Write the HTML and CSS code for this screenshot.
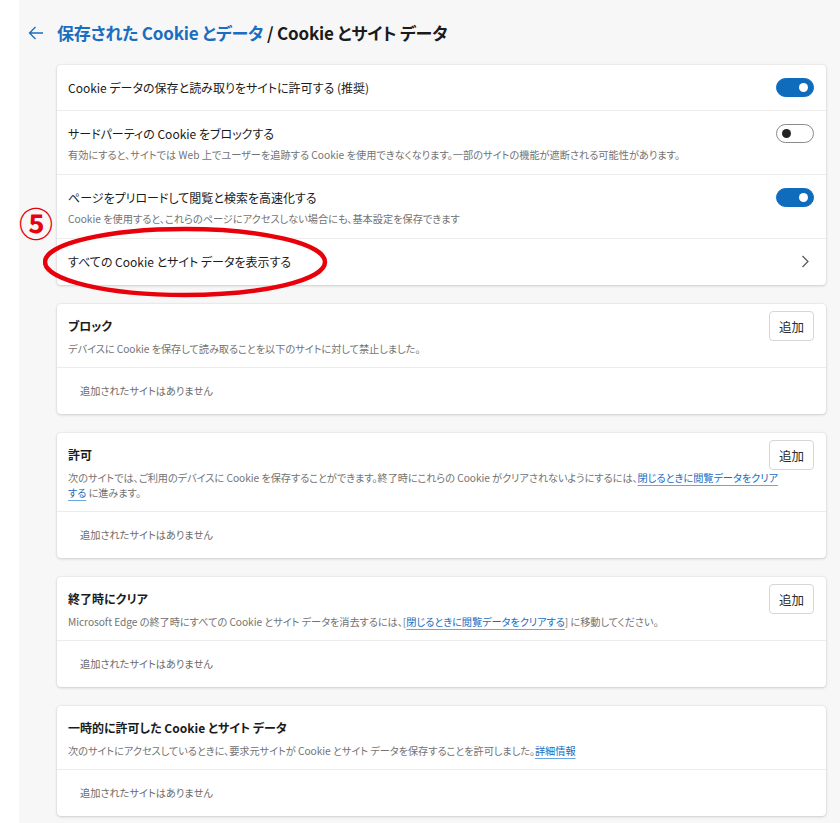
FILE: index.html
```html
<!DOCTYPE html>
<html lang="ja">

<head>
	<meta charset="utf-8" />
	<title>Cookie とサイト データ</title>
	<link rel="stylesheet" href="styles.css">
</head>

<body>
	<div class="page">
		<div class="rail"></div>
		<main class="content">
			<header class="crumbs">
				<button class="back" aria-label="戻る">
					<svg width="16" height="14" viewBox="0 0 16 14">
						<path d="M15 7H1.5M7.5 1L1.5 7l6 6" fill="none" stroke="#1a6dc0" stroke-width="1.3" />
					</svg>
				</button>
				<h1><a href="#">保存された Cookie とデータ</a> / Cookie とサイト データ</h1>
			</header>

			<section class="card">
				<div class="row">
					<div class="row-text">
						<div class="row-title">Cookie データの保存と読み取りをサイトに許可する (推奨)</div>
					</div>
					<span class="toggle on"></span>
				</div>
				<div class="row">
					<div class="row-text">
						<div class="row-title">サードパーティの Cookie をブロックする</div>
						<div class="row-desc">有効にすると、サイトでは Web 上でユーザーを追跡する Cookie を使用できなくなります。一部のサイトの機能が遮断される可能性があります。</div>
					</div>
					<span class="toggle"></span>
				</div>
				<div class="row">
					<div class="row-text">
						<div class="row-title">ページをプリロードして閲覧と検索を高速化する</div>
						<div class="row-desc">Cookie を使用すると、これらのページにアクセスしない場合にも、基本設定を保存できます</div>
					</div>
					<span class="toggle on"></span>
				</div>
				<a class="row link-row" href="#">
					<div class="row-text">
						<div class="row-title">すべての Cookie とサイト データを表示する</div>
					</div>
					<svg class="chevron" width="8" height="13" viewBox="0 0 8 13">
						<path d="M1.5 1l5.5 5.5L1.5 12" fill="none" stroke="#555" stroke-width="1.2" />
					</svg>
				</a>
			</section>

			<section class="card">
				<div class="list-head">
					<div class="list-text">
						<h2>ブロック</h2>
						<p>デバイスに Cookie を保存して読み取ることを以下のサイトに対して禁止しました。</p>
					</div>
					<button class="add">追加</button>
				</div>
				<div class="empty">追加されたサイトはありません</div>
			</section>

			<section class="card">
				<div class="list-head">
					<div class="list-text">
						<h2>許可</h2>
						<p>次のサイトでは、ご利用のデバイスに Cookie を保存することができます。終了時にこれらの Cookie がクリアされないようにするには、<a href="#">閉じるときに閲覧データをクリアする</a> に進みます。</p>
					</div>
					<button class="add">追加</button>
				</div>
				<div class="empty">追加されたサイトはありません</div>
			</section>

			<section class="card">
				<div class="list-head">
					<div class="list-text">
						<h2>終了時にクリア</h2>
						<p>Microsoft Edge の終了時にすべての Cookie とサイト データを消去するには、[<a href="#">閉じるときに閲覧データをクリアする</a>] に移動してください。</p>
					</div>
					<button class="add">追加</button>
				</div>
				<div class="empty">追加されたサイトはありません</div>
			</section>

			<section class="card">
				<div class="list-head">
					<div class="list-text">
						<h2>一時的に許可した Cookie とサイト データ</h2>
						<p>次のサイトにアクセスしているときに、要求元サイトが Cookie とサイト データを保存することを許可しました。<a href="#">詳細情報</a></p>
					</div>
				</div>
				<div class="empty">追加されたサイトはありません</div>
			</section>
		</main>
	</div>

	<!-- annotation over the screenshot -->
	<div class="callout-num">⑤</div>
	<svg class="callout-ring" width="300" height="80" viewBox="0 0 300 80">
		<ellipse cx="142" cy="37" rx="140" ry="33" fill="none" stroke="#e8000b" stroke-width="4.5" />
	</svg>
</body>

</html>
```

FILE: styles.css
```css
body {
	margin: 0;
	background-color: #f7f7f7;
	font-family: "Noto Sans CJK JP", "Noto Sans", sans-serif;
	font-feature-settings: "palt";
	color: #1b1b1b;
	position: relative;
}

.page {
	display: flex;
	min-height: 823px;
}

.rail {
	width: 19px;
	background-color: #ffffff;
}

.content {
	flex: 1;
	padding: 0 14px 0 9px;
}

.crumbs {
	height: 65px;
	display: flex;
	align-items: center;
}

.back {
	width: 29px;
	padding: 0;
	border: none;
	background: none;
	text-align: left;
	display: flex;
}

.crumbs h1 {
	margin: 0;
	font-size: 17px;
	font-weight: 600;
	letter-spacing: -0.2px;
}

.crumbs h1 a {
	color: #1a6dc0;
	text-decoration: none;
}

.card {
	margin: 0 0 19px 29px;
	background-color: #ffffff;
	border-radius: 4px;
	box-shadow: 0 0 2px rgba(0, 0, 0, 0.12), 0 1px 3px rgba(0, 0, 0, 0.14);
}

.row {
	display: flex;
	align-items: flex-start;
	padding: 12px 12px 12px 11px;
	border-top: 1px solid #ececec;
	color: inherit;
	text-decoration: none;
}

.row:first-child {
	border-top: none;
}

.row-text {
	flex: 1;
}

.row-title {
	font-size: 12px;
	line-height: 21px;
}

.row-desc {
	font-size: 10.2px;
	line-height: 15px;
	margin-top: 3px;
	color: #737373;
}

.toggle {
	width: 36px;
	height: 17px;
	border: 1px solid #8a8a8a;
	border-radius: 10px;
	margin-top: 1px;
	position: relative;
	background-color: #ffffff;
}

.toggle::after {
	content: "";
	position: absolute;
	left: 5px;
	top: 4px;
	width: 9px;
	height: 9px;
	border-radius: 50%;
	background-color: #242424;
}

.toggle.on {
	background-color: #0f6cbd;
	border-color: #0f6cbd;
}

.toggle.on::after {
	left: auto;
	right: 5px;
	background-color: #ffffff;
}

.link-row {
	align-items: center;
	padding-bottom: 13px;
}

.chevron {
	margin-right: 5px;
}

.list-head {
	display: flex;
	align-items: flex-start;
	padding: 7px 12px 11px 11px;
}

.list-text {
	flex: 1;
}

.list-text h2 {
	margin: 0;
	font-size: 12px;
	font-weight: 600;
	line-height: 30px;
}

.list-text p {
	margin: 0 -10px 0 0;
	font-size: 10.2px;
	line-height: 15px;
	letter-spacing: -0.05px;
	color: #737373;
}

.list-text p a {
	color: #1a6dc0;
	text-decoration: underline;
	text-decoration-color: #6aa7e0;
	text-underline-offset: 3px;
}

.add {
	width: 45px;
	height: 30px;
	padding: 0;
	border: 1px solid #d6d6d6;
	border-radius: 4px;
	background-color: #ffffff;
	font-family: inherit;
	font-size: 12.5px;
	color: #2b2b2b;
}

.empty {
	border-top: 1px solid #ececec;
	height: 46px;
	line-height: 46px;
	padding-left: 23px;
	font-size: 10.2px;
	color: #6b6b6b;
}

.callout-num {
	position: absolute;
	left: 19px;
	top: 204px;
	font-size: 34px;
	line-height: 38px;
	font-weight: 700;
	color: #e8000b;
}

.callout-ring {
	position: absolute;
	left: 43px;
	top: 225px;
}
```
